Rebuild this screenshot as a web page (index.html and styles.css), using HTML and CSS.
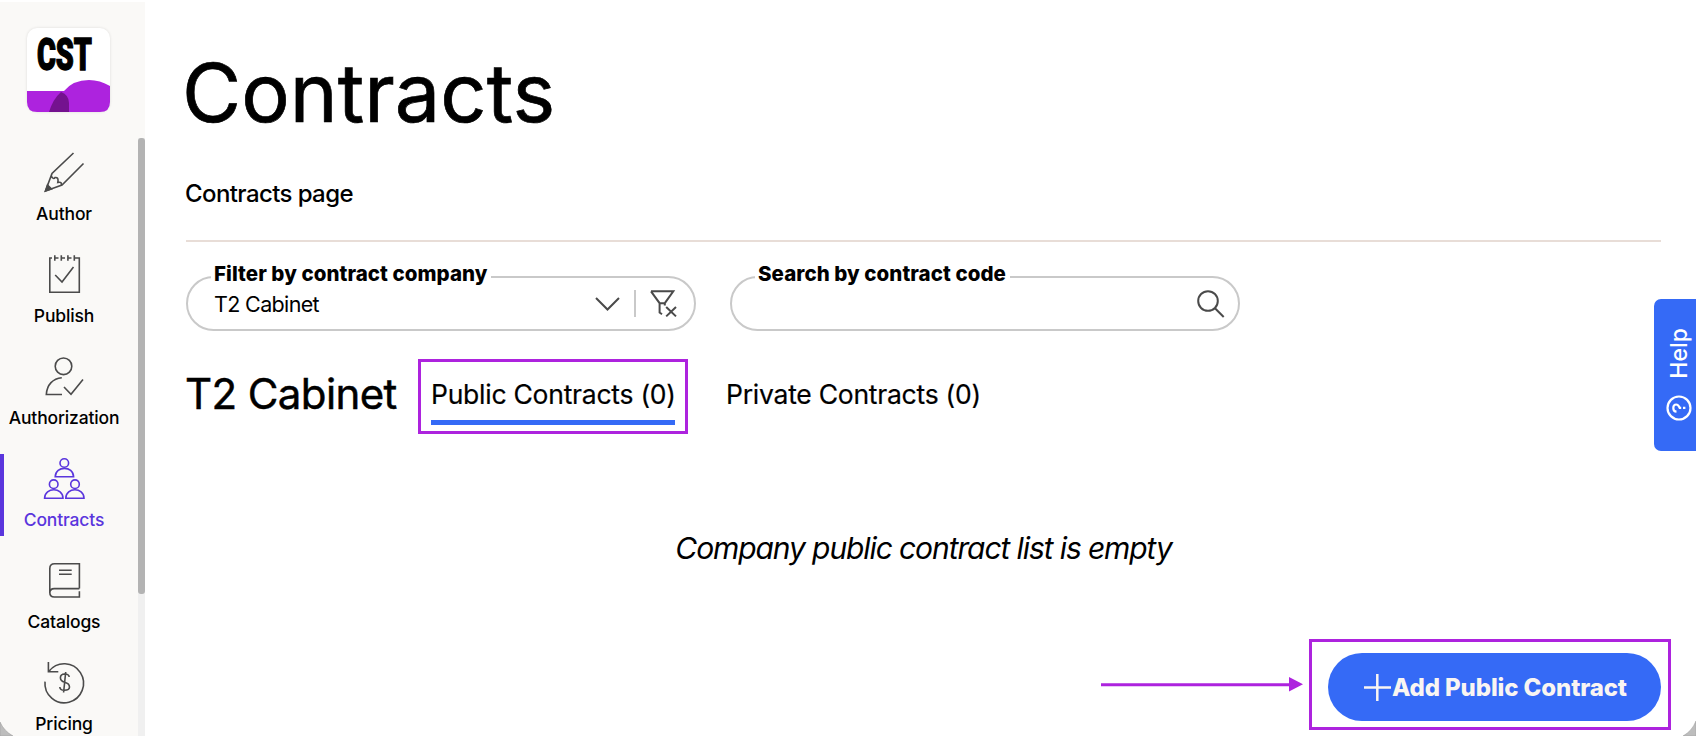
FILE: index.html
```html
<!DOCTYPE html>
<html lang="en">
<head>
<meta charset="utf-8">
<title>Contracts</title>
<link rel="stylesheet" href="styles.css">
</head>
<body>
<div class="app">
  <aside class="sidebar">
    <div class="logo">
      <svg width="83" height="84" viewBox="0 0 83 84">
        <path fill="#ad23de" d="M0 63H37Q46 52 62 52Q73 52 83 58V74Q83 84 73 84H10Q0 84 0 74Z"/>
        <path fill="#74128f" d="M22 84Q26 71 34 64Q42 67 42 75V84Z"/>
        <text class="logo-text" x="10" y="42" textLength="55" lengthAdjust="spacingAndGlyphs">CST</text>
      </svg>
    </div>
    <nav class="nav">
      <a class="item"><svg class="icon" viewBox="0 0 40 40"><path d="M29.5 1L8 21.5L1.5 39L18 33L39.5 11.5M8 21.5L7.2 24Q9.5 28 11 25.5Q15 25 13.8 30.5Q18.5 29.5 17 33"/><path class="solid" d="M3.5 33L7.5 37L1.5 39Z"/></svg><span class="label">Author</span></a>
      <a class="item"><svg class="icon" viewBox="0 0 40 40"><path d="M8 4H5.8V38.3H35.3V4H30.5M10.8 4H14.5M17 4H21M23.5 4H27.5M10.8 1.3V6.7M17.3 1.3V6.7M23.9 1.3V6.7M30.3 1.3V6.7M11.2 21L18 28L29.5 13"/></svg><span class="label">Publish</span></a>
      <a class="item"><svg class="icon" viewBox="0 0 40 40"><circle cx="19.5" cy="10.3" r="8.3"/><path d="M17.8 21.7C9 22.5 3 28.5 2.3 38.5H18M20 31L27 38.3L39 23.5"/></svg><span class="label">Authorization</span></a>
      <a class="item active"><svg class="icon" viewBox="0 0 40 40"><circle cx="20.3" cy="5" r="4.3"/><path d="M11.2 18.8C11.5 7.5 29.3 7.5 29.6 18.8Z"/><circle cx="9.7" cy="26.2" r="4.3"/><path d="M.6 40.2C.9 29 18.8 29 19 40.2Z"/><circle cx="31" cy="26.2" r="4.3"/><path d="M21.8 40.2C22 29 39.8 29 40 40.2Z"/></svg><span class="label">Contracts</span></a>
      <a class="item"><svg class="icon" viewBox="0 0 40 40"><path d="M35.4 28.6V3.7H10.5Q5.8 3.7 5.8 8.4V33Q5.8 28.6 10.3 28.6H35.4M5.8 32.5Q5.8 37 10.3 37H35.4V31.3M15 10.2H27.7M15 14.2H27.7"/></svg><span class="label">Catalogs</span></a>
      <a class="item"><svg class="icon" viewBox="0 0 40 40"><path d="M1 19.6A19.3 19.5 0 1 0 5 9.3M4.4 0V9.7H14.3M25.2 15Q24.8 12 20.7 12Q16.4 12 16.4 15.7Q16.4 19 20.7 20.2Q25.5 21.5 25.5 25Q25.5 28.3 20.3 28.3Q16 28.3 15.8 25M21.7 10L19.6 30.5"/></svg><span class="label">Pricing</span></a>
    </nav>
    <div class="scrollbar"><div class="thumb"></div></div>
  </aside>
  <main class="main">
    <h1 class="title">Contracts</h1>
    <p class="subtitle">Contracts page</p>
    <div class="filters">
      <div class="field">
        <span class="legend">Filter by contract company</span>
        <span class="value">T2 Cabinet</span>
        <svg class="chevron" width="25" height="14" viewBox="0 0 25 14"><path d="M1 1L12.5 12.5L24 1"/></svg>
        <span class="divider"></span>
        <svg class="funnel" width="28" height="28" viewBox="0 0 28 28"><path d="M1 1.3H23.3L14.8 13.2H9.6L1 1.3M9.6 13.2V22.6L12 24.3M14.8 13.2V15.6M16.2 17L26 26.4M26 17L16.2 26.4"/></svg>
      </div>
      <div class="field">
        <span class="legend">Search by contract code</span>
        <svg class="search" width="28" height="28" viewBox="0 0 28 28"><circle cx="11" cy="11" r="9.8"/><path d="M18 18.3L26.7 27"/></svg>
      </div>
    </div>
    <div class="tabs">
      <h2 class="company">T2 Cabinet</h2>
      <div class="tabbox"><span class="tab selected">Public Contracts (0)</span></div>
      <span class="tab private">Private Contracts (0)</span>
    </div>
    <p class="empty">Company public contract list is empty</p>
    <div class="actions">
      <svg class="arrow" width="202" height="15" viewBox="0 0 202 15"><path d="M0 6.2H188V0L202 7.3L188 14.6V9.2H0Z"/></svg>
      <div class="callout">
        <button class="add"><svg width="27" height="27" viewBox="0 0 27 27"><path d="M13.3 0V27M0 13.5H27"/></svg><span>Add Public Contract</span></button>
      </div>
    </div>
  </main>
  <div class="help">
    <svg width="26" height="26" viewBox="0 0 26 26"><circle cx="13" cy="13" r="11.5"/><path d="M9.3 10.5Q9.5 7.3 13 7.3Q16.5 7.3 16.5 10.2Q16.5 12.3 13.2 13.7V15.2M13.1 17V19.4"/></svg>
    <span>Help</span>
  </div>
  <svg class="corner left" width="14" height="17" viewBox="0 0 14 17"><path d="M0 3Q4 12 13 17H0Z"/></svg>
  <svg class="corner right" width="14" height="17" viewBox="0 0 14 17"><path d="M14 2Q10 12 1 17H14Z"/></svg>
</div>
</body>
</html>
```
FILE: styles.css
```css
* { box-sizing: border-box; }
body { margin: 0; font-family: Inter, sans-serif; color: #000; background: #fff; overflow: hidden; }
h1, h2, p { margin: 0; font-weight: 400; white-space: nowrap; }
svg { display: block; flex: none; fill: none; overflow: visible; }
.app { position: relative; display: flex; height: 736px; padding-top: 2px; overflow: hidden; }

.sidebar { position: relative; flex: none; width: 145px; height: 734px; padding-top: 26px; background: #faf9f7; }
.logo { width: 83px; height: 84px; margin-left: 27px; border-radius: 10px; background: #fff; box-shadow: 0 0 3px rgba(0,0,0,.12); }
.logo-text { font: 900 44px Roboto, sans-serif; fill: #000; stroke: #000; stroke-width: 1.4; }
.nav { display: flex; flex-direction: column; gap: 20px; width: 128px; margin-top: 36px; }
.item { display: flex; flex: none; flex-direction: column; align-items: center; height: 82px; padding-top: 4px; }
.icon { width: 40px; height: 40px; stroke: #4b4b4b; stroke-width: 1.6; }
.icon .solid { fill: #4b4b4b; }
.label { margin-top: 10px; font-size: 17.5px; line-height: 24px; font-weight: 450; letter-spacing: -.15px; white-space: nowrap; }
.active { background: linear-gradient(#5a36dd, #5a36dd) left / 4px 100% no-repeat; color: #5a36dd; border-radius: 0 3px 3px 0; }
.active .icon { stroke: #5a36dd; }
.scrollbar { position: absolute; right: 0; top: 136px; bottom: 0; width: 7px; background: #f0f0f0; }
.thumb { height: 456px; border-radius: 3px; background: #b3b3b3; }

.main { flex: 1; padding: 42px 35px 0 41px; }
.title { height: 99px; margin-left: -4px; font-size: 81px; line-height: 98px; letter-spacing: .05px; -webkit-text-stroke: .7px #000; }
.subtitle { height: 99px; padding-top: 35px; border-bottom: 2px solid #e8ddd7; font-size: 24px; line-height: 32px; letter-spacing: -.6px; text-indent: -1px; font-weight: 450; }
.filters { display: flex; gap: 34px; margin-top: 34px; }
.field { position: relative; display: flex; align-items: center; width: 510px; height: 55px; padding: 0 16px 0 27px; border: 2px solid #c9c9c9; border-radius: 28px; }
.legend { position: absolute; left: 23px; top: -18px; padding: 0 4px 0 3px; background: #fff; font-size: 20.5px; line-height: 28px; font-weight: 800; letter-spacing: .06px; white-space: nowrap; }
.value { flex: 1; font-size: 21.5px; letter-spacing: -.65px; text-indent: -1px; }
.chevron, .funnel, .search { stroke: #4a4a4a; stroke-width: 2; }
.search { margin-left: auto; margin-right: -3px; }
.divider { width: 2px; height: 27px; margin: 0 14px; background: #c9c9c9; }
.tabs { display: flex; margin-top: 28px; height: 75px; }
.company { width: 232px; font-size: 42px; line-height: 70px; letter-spacing: -.6px; text-indent: -1px; -webkit-text-stroke: .5px #000; }
.tabbox { width: 270px; height: 75px; padding: 10px; border: 3px solid #ad23de; }
.tab { display: block; font-size: 26.5px; letter-spacing: -.25px; white-space: nowrap; line-height: 44px; -webkit-text-stroke: .2px #000; }
.selected { height: 53px; border-bottom: 5px solid #356af6; }
.private { margin: 13px 0 0 38px; }
.empty { margin-top: 93px; height: 40px; font-size: 30px; line-height: 42px; font-style: italic; text-align: center; letter-spacing: -1.1px; }
.actions { display: flex; justify-content: flex-end; margin: 72px -10px 0 0; }
.arrow { margin: 38px 6px 0 0; fill: #ad23de; }
.callout { width: 362px; height: 91px; padding: 11px 7px 9px 16px; border: 3px solid #ad23de; }
.add { display: flex; align-items: center; gap: 1px; width: 333px; height: 68px; padding: 0 0 0 36px; border: 0; border-radius: 34px; background: #356af6; color: #f9f5f2; font: 800 24px Inter, sans-serif; letter-spacing: -.12px; white-space: nowrap; }
.add svg { stroke: #f9f5f2; stroke-width: 2.5; }
.add span { padding-top: 1px; }
.help { position: absolute; right: 0; top: 299px; display: flex; flex-direction: row-reverse; align-items: center; gap: 16px; width: 42px; height: 152px; padding: 28px 0 30px 8px; border-radius: 7px 0 0 7px; background: #356af6; color: #fff; font-size: 23px; font-weight: 500; writing-mode: vertical-rl; }
.help span { transform: rotate(180deg); line-height: 26px; }
.help svg { transform: rotate(-90deg); stroke: #fff; stroke-width: 2.2; }
.corner { position: absolute; bottom: 0; fill: #bdbdbd; stroke: #999; stroke-width: .5; }
.left { left: 0; }
.right { right: 0; }
```
